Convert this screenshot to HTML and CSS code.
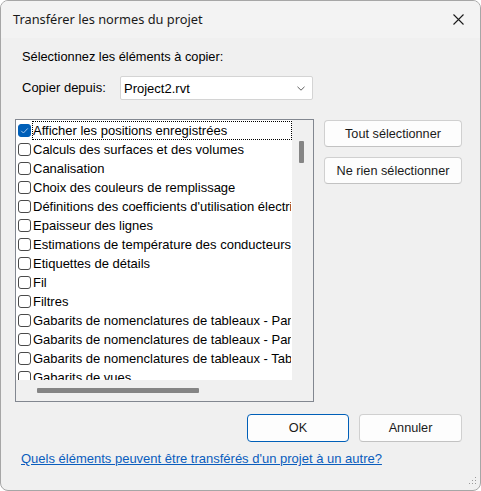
FILE: index.html
```html
<!DOCTYPE html>
<html lang="fr">
<head>
<meta charset="utf-8">
<title>Transférer les normes du projet</title>
<link rel="stylesheet" href="styles.css">
</head>
<body>
<div class="window">
  <div class="titlebar">
    <span class="title">Transférer les normes du projet</span>
    <span class="close">
      <svg width="11" height="11" viewBox="0 0 11 11"><path d="M0.5 0.5 L10.5 10.5 M10.5 0.5 L0.5 10.5" stroke="#1b1b1b" stroke-width="1.1" fill="none"/></svg>
    </span>
  </div>
  <div class="content">
    <div class="prompt">Sélectionnez les éléments à copier:</div>
    <div class="source-row">
      <span class="source-label">Copier depuis:</span>
      <div class="select">
        <span>Project2.rvt</span>
        <svg class="chevron" width="8" height="5" viewBox="0 0 8 5"><path d="M0.5 0.8 L4 4.2 L7.5 0.8" stroke="#5f5f5f" stroke-width="1" fill="none"/></svg>
      </div>
    </div>
    <div class="main">
      <div class="listbox">
        <div class="list-view">
          <div class="item"><span class="cb checked"><svg width="13" height="13" viewBox="0 0 13 13"><path d="M3.2 6.8 L5.4 9 L9.8 4.4" stroke="#a9c9ee" stroke-width="1" fill="none"/></svg></span><span class="item-label focus">Afficher les positions enregistrées</span></div>
          <div class="item"><span class="cb"></span><span class="item-label">Calculs des surfaces et des volumes</span></div>
          <div class="item"><span class="cb"></span><span class="item-label">Canalisation</span></div>
          <div class="item"><span class="cb"></span><span class="item-label">Choix des couleurs de remplissage</span></div>
          <div class="item"><span class="cb"></span><span class="item-label">Définitions des coefficients d'utilisation électriques</span></div>
          <div class="item"><span class="cb"></span><span class="item-label">Epaisseur des lignes</span></div>
          <div class="item"><span class="cb"></span><span class="item-label">Estimations de température des conducteurs</span></div>
          <div class="item"><span class="cb"></span><span class="item-label">Etiquettes de détails</span></div>
          <div class="item"><span class="cb"></span><span class="item-label">Fil</span></div>
          <div class="item"><span class="cb"></span><span class="item-label">Filtres</span></div>
          <div class="item"><span class="cb"></span><span class="item-label">Gabarits de nomenclatures de tableaux - Panneau</span></div>
          <div class="item"><span class="cb"></span><span class="item-label">Gabarits de nomenclatures de tableaux - Panneau</span></div>
          <div class="item"><span class="cb"></span><span class="item-label">Gabarits de nomenclatures de tableaux - Tableau</span></div>
          <div class="item"><span class="cb"></span><span class="item-label">Gabarits de vues</span></div>
        </div>
        <div class="vscroll"><div class="vthumb"></div></div>
        <div class="hscroll"><div class="hthumb"></div></div>
      </div>
      <div class="side-buttons">
        <button class="btn side">Tout sélectionner</button>
        <button class="btn side">Ne rien sélectionner</button>
      </div>
    </div>
    <div class="footer-buttons">
      <button class="btn primary">OK</button>
      <button class="btn">Annuler</button>
    </div>
    <a class="help-link" href="#">Quels éléments peuvent être transférés d'un projet à un autre?</a>
  </div>
  <svg class="grip" width="12" height="12" viewBox="0 0 12 12">
    <rect x="9" y="1" width="1" height="1" fill="#9a9a9a"/>
    <rect x="6" y="4" width="1" height="1" fill="#9a9a9a"/>
    <rect x="9" y="4" width="1" height="1" fill="#9a9a9a"/>
    <rect x="3" y="7" width="1" height="1" fill="#9a9a9a"/>
    <rect x="6" y="7" width="1" height="1" fill="#9a9a9a"/>
    <rect x="9" y="7" width="1" height="1" fill="#9a9a9a"/>
  </svg>
</div>
</body>
</html>
```

FILE: styles.css
```css
html, body {
  margin: 0;
  padding: 0;
  background: #ffffff;
}

.window {
  width: 481px;
  height: 491px;
  box-sizing: border-box;
  border: 1px solid #a6a6a6;
  border-radius: 8px;
  background: #f0f0f0;
  overflow: hidden;
  position: relative;
  font-family: "Liberation Sans", Arial, sans-serif;
  font-size: 13px;
  color: #000;
}

.titlebar {
  height: 37px;
  display: flex;
  align-items: center;
  justify-content: space-between;
  padding-left: 12px;
  background: #f3f3f3;
}

.title {
  font-family: "Noto Sans", "Liberation Sans", sans-serif;
  font-size: 12.8px;
  line-height: 16px;
  color: #1a1a1a;
  margin-bottom: 2px;
}

.close {
  width: 44px;
  height: 37px;
  display: flex;
  align-items: center;
  justify-content: center;
}

.content {
  display: flex;
  flex-direction: column;
  padding: 0 18px 0 14px;
}

.prompt {
  margin: 11px 0 0 7px;
  line-height: 16px;
  font-size: 12.8px;
}

.source-row {
  display: flex;
  align-items: center;
  margin-top: 11px;
  padding-left: 7px;
}

.source-label {
  width: 98px;
  line-height: 16px;
}

.select {
  width: 193px;
  height: 24px;
  box-sizing: border-box;
  border: 1px solid #d4d4d4;
  border-radius: 2px;
  background: #fff;
  display: flex;
  align-items: center;
  justify-content: space-between;
  padding: 0 7px 0 3px;
}

.main {
  display: flex;
  gap: 10px;
  margin-top: 19px;
}

.listbox {
  width: 299px;
  height: 283px;
  box-sizing: border-box;
  border: 1px solid #828790;
  background: #f0f0f0;
  display: grid;
  grid-template-columns: 276px 21px;
  grid-template-rows: 260px 21px;
}

.list-view {
  background: #fff;
  overflow: hidden;
  white-space: nowrap;
  padding-top: 1px;
}

.item {
  height: 19px;
  display: flex;
  align-items: center;
}

.cb {
  width: 13px;
  height: 13px;
  box-sizing: border-box;
  border: 1px solid #4a4a4a;
  border-radius: 3px;
  background: #fff;
  margin-left: 2px;
  flex: none;
  position: relative;
}

.cb.checked {
  background: #005fb8;
  border-color: #005fb8;
}

.cb.checked svg {
  position: absolute;
  left: -1px;
  top: -1px;
}

.item-label {
  flex: 1;
  margin-left: 1px;
  height: 19px;
  box-sizing: border-box;
  border: 1px dotted transparent;
  line-height: 17px;
  overflow: hidden;
}

.item-label.focus {
  border-color: #000;
}

.vthumb {
  margin: 21px 0 0 7px;
  width: 5px;
  height: 22px;
  background: #858585;
  border-radius: 1px;
}

.hscroll {
  grid-column: 1 / span 2;
}

.hthumb {
  margin: 8px 0 0 21px;
  width: 162px;
  height: 5px;
  background: #858585;
  border-radius: 1px;
}

.side-buttons {
  display: flex;
  flex-direction: column;
  gap: 10px;
  margin-top: 1px;
}

.btn {
  font-family: "Liberation Sans", Arial, sans-serif;
  font-size: 12.7px;
  color: #1a1a1a;
  background: #fdfdfd;
  border: 1px solid #d0d0d0;
  border-bottom-color: #c2c2c2;
  border-radius: 4px;
  padding: 0;
  height: 28px;
  width: 103px;
}

.btn.side {
  width: 138px;
  height: 27px;
}

.btn.primary {
  width: 102px;
  border-color: #005fb8;
  background: #fdfdfd;
}

.footer-buttons {
  display: flex;
  justify-content: flex-end;
  gap: 10px;
  margin-top: 12px;
}

.help-link {
  margin: 9px 0 0 6px;
  line-height: 16px;
  color: #0a5dbd;
  text-decoration: underline;
  align-self: flex-start;
}

.grip {
  position: absolute;
  right: 2px;
  bottom: 2px;
}
```
